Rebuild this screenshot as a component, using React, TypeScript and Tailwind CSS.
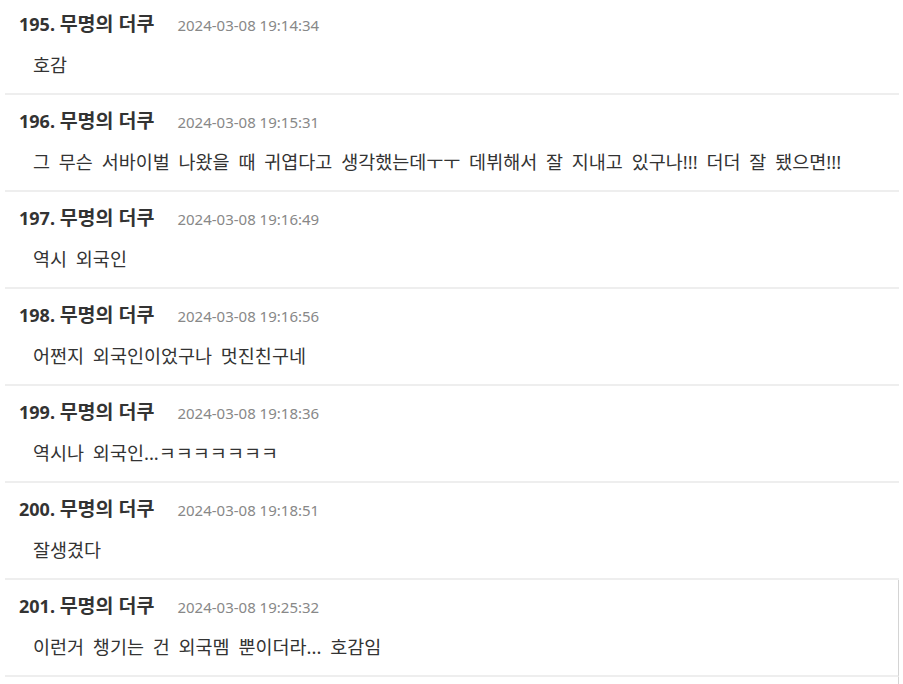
const comments = [
  { no: 195, at: '2024-03-08 19:14:34', text: '호감' },
  { no: 196, at: '2024-03-08 19:15:31', text: '그 무슨 서바이벌 나왔을 때 귀엽다고 생각했는데ㅜㅜ 데뷔해서 잘 지내고 있구나!!! 더더 잘 됐으면!!!' },
  { no: 197, at: '2024-03-08 19:16:49', text: '역시 외국인' },
  { no: 198, at: '2024-03-08 19:16:56', text: '어쩐지 외국인이었구나 멋진친구네' },
  { no: 199, at: '2024-03-08 19:18:36', text: '역시나 외국인...ㅋㅋㅋㅋㅋㅋㅋ' },
  { no: 200, at: '2024-03-08 19:18:51', text: '잘생겼다' },
  { no: 201, at: '2024-03-08 19:25:32', text: '이런거 챙기는 건 외국멤 뿐이더라... 호감임' },
]

// ── Comment list ──────────────────────────────────────────────────────────────
export default function App() {
  return (
    <div
      className="min-h-screen overflow-hidden bg-white"
      style={{ fontFamily: '"Noto Sans", "Noto Sans CJK KR", sans-serif' }}
    >
      <ul className="-mt-[2px] ml-[5px] w-[894px]">
        {comments.map((c, i) => (
          <li
            key={c.no}
            className={`h-[97px] border-b-2 border-[#eeeeee] pl-[14px] pt-[12px] ${
              i === comments.length - 1 ? 'border-r border-r-[#d4d4d4]' : ''
            }`}
          >
            <div className="flex h-[28px] items-baseline leading-[28px]">
              <span className="text-[18px] font-bold text-[#333333]">
                {c.no}. <span className="text-[19.5px]">무명의 더쿠</span>
              </span>
              <span className="ml-[23px] text-[15px] text-[#888888]">{c.at}</span>
            </div>
            <p className="mt-[13px] pl-[14px] text-[18.5px] leading-[28px] text-[#333333] [word-spacing:4px]">
              {c.text}
            </p>
          </li>
        ))}
      </ul>
      <div className="ml-[5px] h-[10px] w-[894px] border-r border-r-[#d4d4d4]" />
    </div>
  )
}
